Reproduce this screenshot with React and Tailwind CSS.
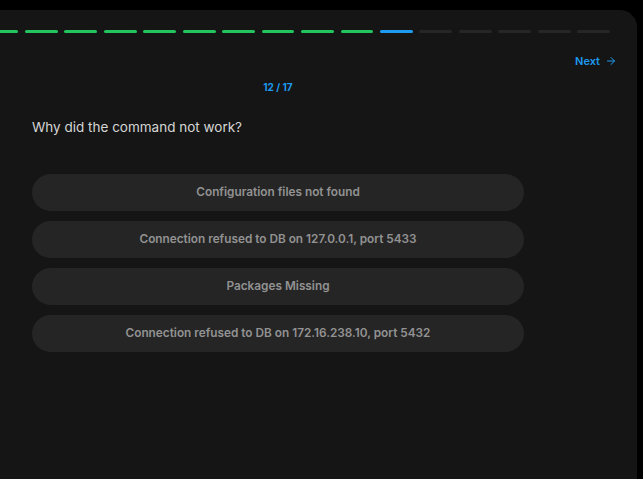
import React from "react";
import { ArrowRight } from "lucide-react";

const options = [
  "Configuration files not found",
  "Connection refused to DB on 127.0.0.1, port 5433",
  "Packages Missing",
  "Connection refused to DB on 172.16.238.10, port 5432",
];

export default function App() {
  const segs = Array.from({ length: 17 }, (_, i) => i);
  return (
    <div
      className="w-[643px] h-[479px] bg-black overflow-hidden pt-[10px]"
      style={{ fontFamily: "Inter, 'Noto Sans', sans-serif" }}
    >
      <div className="ml-[-81px] w-[718px] h-[469px] bg-[#151515] rounded-t-[17px] px-[27px] pt-[20px]">
        <div className="flex gap-[6.6px] h-[3px]">
          {segs.map((i) => (
            <div
              key={i}
              className={
                i < 11
                  ? "flex-1 rounded-full bg-[#22c55e]"
                  : i === 11
                  ? "flex-1 rounded-full bg-[#1d9bf0]"
                  : "flex-1 rounded-full bg-[#262626]"
              }
            />
          ))}
        </div>
        <div className="flex justify-end mr-[-5px] mt-[20px]">
          <button className="flex items-center gap-[5px] text-[11px] font-semibold text-[#1d9bf0] leading-[16px] translate-x-[2px]">
            Next
            <ArrowRight size={12} strokeWidth={2} />
          </button>
        </div>
        <div className="w-[492px] mx-auto">
          <div className="text-center text-[10px] font-bold text-[#1d9bf0] mt-[11px] leading-[14px]">
            12 / 17
          </div>
          <div className="text-[13.5px] text-[#d6d6d6] mt-[23px] leading-[20px]">
            Why did the command not work?
          </div>
          <div className="flex flex-col gap-[10px] mt-[37px]">
            {options.map((o) => (
              <div
                key={o}
                className="h-[37px] rounded-full bg-[#252525] flex items-center justify-center text-[11.8px] font-semibold text-[#929292]"
              >
                {o}
              </div>
            ))}
          </div>
        </div>
      </div>
    </div>
  );
}
